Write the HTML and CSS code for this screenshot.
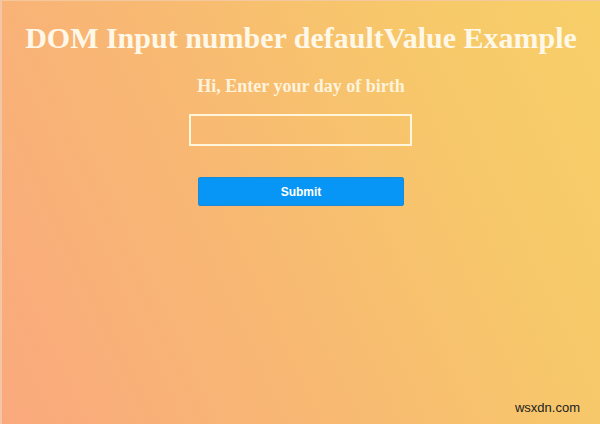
FILE: index.html
```html
<!DOCTYPE html>
<html lang="en">
<head>
<meta charset="utf-8">
<title>DOM Input number defaultValue Example</title>
<link rel="stylesheet" href="styles.css">
</head>
<body>
<main class="page">
  <h1 class="title">DOM Input number defaultValue Example</h1>
  <h3 class="subtitle">Hi, Enter your day of birth</h3>
  <input class="field" type="number">
  <button class="submit" type="button">Submit</button>
</main>
<div class="watermark">wsxdn.com</div>
</body>
</html>
```
FILE: styles.css
```css
html, body {
  margin: 0;
  padding: 0;
  width: 600px;
  height: 424px;
  overflow: hidden;
}
body {
  background: linear-gradient(65deg, #faa97d 0%, #f8b873 40%, #f7c86a 75%, #f7cf68 100%);
  border-left: 2px solid #f3c6a6;
  border-top: 1px solid #f4c79c;
  box-sizing: border-box;
  position: relative;
}
.page {
  display: flex;
  flex-direction: column;
  align-items: center;
  padding-top: 20px;
}
.title {
  margin: 0;
  font-family: "Liberation Serif", "Times New Roman", serif;
  font-weight: bold;
  font-size: 30px;
  color: #fff8e8;
  text-align: center;
}
.subtitle {
  margin: 21px 0 0;
  font-family: "Liberation Serif", "Times New Roman", serif;
  font-weight: bold;
  font-size: 18px;
  color: #fff3dc;
}
.field {
  margin: 17px 0 0 -1px;
  width: 223px;
  height: 32px;
  box-sizing: border-box;
  background: transparent;
  border: 2px solid #fff6dc;
  outline: none;
}
.submit {
  margin: 31px 0 0;
  width: 206px;
  height: 29px;
  background: #0896f6;
  border: 1px solid #1a8ad8;
  border-radius: 2px;
  color: #ffffff;
  font-family: "Liberation Sans", Arial, sans-serif;
  font-weight: bold;
  font-size: 12px;
}
.watermark {
  position: absolute;
  right: 20px;
  bottom: 9px;
  font-family: "Liberation Sans", Arial, sans-serif;
  font-size: 13px;
  color: #222;
}
```
